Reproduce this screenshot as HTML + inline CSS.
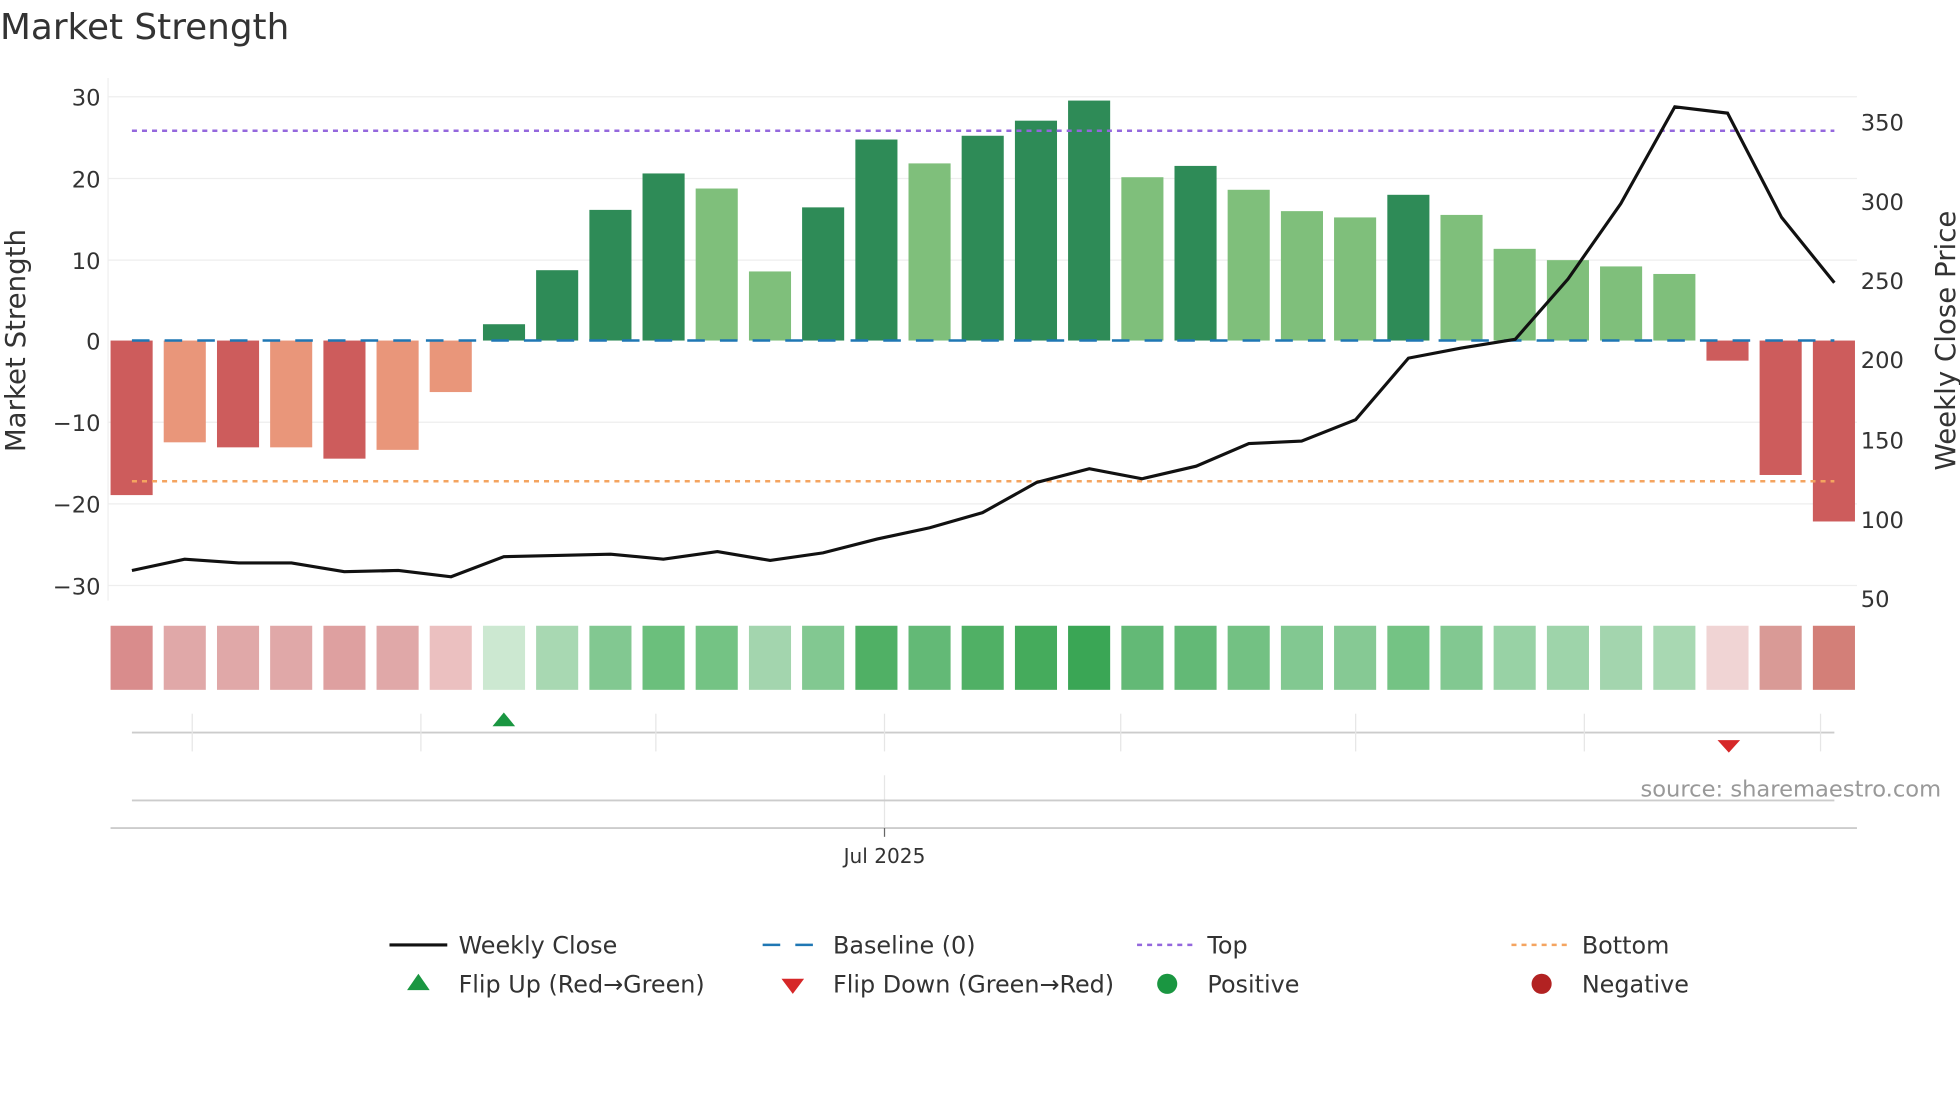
<!DOCTYPE html>
<html><head><meta charset="utf-8"><style>
html,body{margin:0;padding:0;background:#fff;width:1960px;height:1102px;overflow:hidden}
text{font-family:"DejaVu Sans","Liberation Sans",sans-serif}
</style></head><body>
<svg width="1960" height="1102" viewBox="0 0 1560 877" xmlns="http://www.w3.org/2000/svg">
<text x="0" y="31" font-size="28.5" fill="#333">Market Strength</text>
<line x1="86" y1="62" x2="86" y2="478" stroke="#eee"/>
<g stroke="#eeeeee" stroke-width="1">
<line x1="86" y1="77" x2="1478" y2="77"/><line x1="86" y1="142" x2="1478" y2="142"/><line x1="86" y1="207" x2="1478" y2="207"/><line x1="86" y1="336" x2="1478" y2="336"/><line x1="86" y1="401" x2="1478" y2="401"/><line x1="86" y1="466" x2="1478" y2="466"/>
</g>
<g font-size="18" fill="#333" text-anchor="end">
<text x="80" y="84">30</text><text x="80" y="149">20</text><text x="80" y="214">10</text><text x="80" y="278">0</text><text x="80" y="343">−10</text><text x="80" y="408">−20</text><text x="80" y="473">−30</text>
</g>
<g font-size="18" fill="#333">
<text x="1481" y="104">350</text><text x="1481" y="167">300</text><text x="1481" y="230">250</text><text x="1481" y="293">200</text><text x="1481" y="357">150</text><text x="1481" y="420">100</text><text x="1481" y="483">50</text>
</g>
<text transform="translate(20,271) rotate(-90)" font-size="22" fill="#333" text-anchor="middle">Market Strength</text>
<text transform="translate(1556,271) rotate(-90)" font-size="22" fill="#333" text-anchor="middle">Weekly Close Price</text>
<g>
<rect x="88" y="271" width="33.5" height="123" fill="#cd5c5c"/>
<rect x="130.3" y="271" width="33.5" height="81" fill="#e9967a"/>
<rect x="172.7" y="271" width="33.5" height="85" fill="#cd5c5c"/>
<rect x="215" y="271" width="33.5" height="85" fill="#e9967a"/>
<rect x="257.4" y="271" width="33.5" height="94" fill="#cd5c5c"/>
<rect x="299.7" y="271" width="33.5" height="87" fill="#e9967a"/>
<rect x="342" y="271" width="33.5" height="41" fill="#e9967a"/>
<rect x="384.4" y="258" width="33.5" height="13" fill="#2e8b57"/>
<rect x="426.7" y="215" width="33.5" height="56" fill="#2e8b57"/>
<rect x="469.1" y="167" width="33.5" height="104" fill="#2e8b57"/>
<rect x="511.4" y="138" width="33.5" height="133" fill="#2e8b57"/>
<rect x="553.7" y="150" width="33.5" height="121" fill="#7fbf7b"/>
<rect x="596.1" y="216" width="33.5" height="55" fill="#7fbf7b"/>
<rect x="638.4" y="165" width="33.5" height="106" fill="#2e8b57"/>
<rect x="680.8" y="111" width="33.5" height="160" fill="#2e8b57"/>
<rect x="723.1" y="130" width="33.5" height="141" fill="#7fbf7b"/>
<rect x="765.4" y="108" width="33.5" height="163" fill="#2e8b57"/>
<rect x="807.8" y="96" width="33.5" height="175" fill="#2e8b57"/>
<rect x="850.1" y="80" width="33.5" height="191" fill="#2e8b57"/>
<rect x="892.5" y="141" width="33.5" height="130" fill="#7fbf7b"/>
<rect x="934.8" y="132" width="33.5" height="139" fill="#2e8b57"/>
<rect x="977.1" y="151" width="33.5" height="120" fill="#7fbf7b"/>
<rect x="1019.5" y="168" width="33.5" height="103" fill="#7fbf7b"/>
<rect x="1061.8" y="173" width="33.5" height="98" fill="#7fbf7b"/>
<rect x="1104.2" y="155" width="33.5" height="116" fill="#2e8b57"/>
<rect x="1146.5" y="171" width="33.5" height="100" fill="#7fbf7b"/>
<rect x="1188.8" y="198" width="33.5" height="73" fill="#7fbf7b"/>
<rect x="1231.2" y="207" width="33.5" height="64" fill="#7fbf7b"/>
<rect x="1273.5" y="212" width="33.5" height="59" fill="#7fbf7b"/>
<rect x="1315.9" y="218" width="33.5" height="53" fill="#7fbf7b"/>
<rect x="1358.2" y="271" width="33.5" height="16" fill="#cd5c5c"/>
<rect x="1400.5" y="271" width="33.5" height="107" fill="#cd5c5c"/>
<rect x="1442.9" y="271" width="33.5" height="144" fill="#cd5c5c"/>
</g>
<line x1="105" y1="271" x2="1460" y2="271" stroke="#1f77b4" stroke-width="2" stroke-dasharray="14,12"/>
<line x1="105" y1="104" x2="1460" y2="104" stroke="#9467dd" stroke-width="2" stroke-dasharray="4,4"/>
<line x1="105" y1="383" x2="1460" y2="383" stroke="#f4a460" stroke-width="2" stroke-dasharray="4,4"/>
<polyline fill="none" stroke="#111" stroke-width="2.5" points="105,454 147,445 190,448 232,448 274,455 317,454 359,459 401,443 444,442 486,441 528,445 571,439 613,446 655,440 698,429 740,420 782,408 825,384 867,373 909,381 952,371 994,353 1036,351 1079,334 1121,285 1163,277 1206,270 1248,222 1290,162 1333,85 1375,90 1418,173 1460,225"/>
<g>
<rect x="88" y="498" width="33.5" height="51" fill="#d98c8c"/>
<rect x="130.3" y="498" width="33.5" height="51" fill="#e0a8a8"/>
<rect x="172.7" y="498" width="33.5" height="51" fill="#e0a8a8"/>
<rect x="215" y="498" width="33.5" height="51" fill="#e0a8a8"/>
<rect x="257.4" y="498" width="33.5" height="51" fill="#dea0a0"/>
<rect x="299.7" y="498" width="33.5" height="51" fill="#e0a8a8"/>
<rect x="342" y="498" width="33.5" height="51" fill="#ebc0c0"/>
<rect x="384.4" y="498" width="33.5" height="51" fill="#cce8d1"/>
<rect x="426.7" y="498" width="33.5" height="51" fill="#a8d8b2"/>
<rect x="469.1" y="498" width="33.5" height="51" fill="#82c891"/>
<rect x="511.4" y="498" width="33.5" height="51" fill="#6bbf7c"/>
<rect x="553.7" y="498" width="33.5" height="51" fill="#74c384"/>
<rect x="596.1" y="498" width="33.5" height="51" fill="#a3d5ae"/>
<rect x="638.4" y="498" width="33.5" height="51" fill="#82c891"/>
<rect x="680.8" y="498" width="33.5" height="51" fill="#50b065"/>
<rect x="723.1" y="498" width="33.5" height="51" fill="#63b976"/>
<rect x="765.4" y="498" width="33.5" height="51" fill="#50b065"/>
<rect x="807.8" y="498" width="33.5" height="51" fill="#45ab5c"/>
<rect x="850.1" y="498" width="33.5" height="51" fill="#3aa655"/>
<rect x="892.5" y="498" width="33.5" height="51" fill="#63b976"/>
<rect x="934.8" y="498" width="33.5" height="51" fill="#63b976"/>
<rect x="977.1" y="498" width="33.5" height="51" fill="#73c183"/>
<rect x="1019.5" y="498" width="33.5" height="51" fill="#82c891"/>
<rect x="1061.8" y="498" width="33.5" height="51" fill="#86c994"/>
<rect x="1104.2" y="498" width="33.5" height="51" fill="#74c384"/>
<rect x="1146.5" y="498" width="33.5" height="51" fill="#82c891"/>
<rect x="1188.8" y="498" width="33.5" height="51" fill="#98d2a5"/>
<rect x="1231.2" y="498" width="33.5" height="51" fill="#9ed4aa"/>
<rect x="1273.5" y="498" width="33.5" height="51" fill="#a3d5ae"/>
<rect x="1315.9" y="498" width="33.5" height="51" fill="#a8d8b2"/>
<rect x="1358.2" y="498" width="33.5" height="51" fill="#f0d4d4"/>
<rect x="1400.5" y="498" width="33.5" height="51" fill="#d99a96"/>
<rect x="1442.9" y="498" width="33.5" height="51" fill="#d37f78"/>
</g>
<line x1="105" y1="583" x2="1460" y2="583" stroke="#ccc" stroke-width="1.5"/>
<g stroke="#e6e6e6"><line x1="153" y1="568" x2="153" y2="598"/><line x1="335" y1="568" x2="335" y2="598"/><line x1="522" y1="568" x2="522" y2="598"/><line x1="704" y1="568" x2="704" y2="598"/><line x1="892" y1="568" x2="892" y2="598"/><line x1="1079" y1="568" x2="1079" y2="598"/><line x1="1261" y1="568" x2="1261" y2="598"/><line x1="1449" y1="568" x2="1449" y2="598"/><line x1="704" y1="617" x2="704" y2="658"/></g>
<polygon points="392,578 410,578 401,567" fill="#1a9641"/>
<polygon points="1367,589 1385,589 1376,599" fill="#d62728"/>
<line x1="105" y1="637" x2="1460" y2="637" stroke="#ccc" stroke-width="1.5"/>
<text x="1545" y="634" font-size="18" fill="#999" text-anchor="end">source: sharemaestro.com</text>
<line x1="88" y1="659" x2="1478" y2="659" stroke="#ccc" stroke-width="1.5"/>
<line x1="704" y1="659" x2="704" y2="666" stroke="#666"/>
<text x="704" y="687" font-size="16" fill="#333" text-anchor="middle">Jul 2025</text>
<g font-size="19" fill="#333">
<line x1="310" y1="752" x2="356" y2="752" stroke="#111" stroke-width="2.5"/><text x="365" y="759">Weekly Close</text>
<line x1="607" y1="752" x2="653" y2="752" stroke="#1f77b4" stroke-width="2" stroke-dasharray="14,12"/><text x="663" y="759">Baseline (0)</text>
<line x1="905" y1="752" x2="951" y2="752" stroke="#9467dd" stroke-width="2" stroke-dasharray="4,4"/><text x="961" y="759">Top</text>
<line x1="1203" y1="752" x2="1249" y2="752" stroke="#f4a460" stroke-width="2" stroke-dasharray="4,4"/><text x="1259" y="759">Bottom</text>
<polygon points="324,788 342,788 333,775" fill="#1a9641"/><text x="365" y="790">Flip Up (Red→Green)</text>
<polygon points="622,779 640,779 631,791" fill="#d62728"/><text x="663" y="790">Flip Down (Green→Red)</text>
<circle cx="929" cy="783" r="8" fill="#1a9641"/><text x="961" y="790">Positive</text>
<circle cx="1227" cy="783" r="8" fill="#b22222"/><text x="1259" y="790">Negative</text>
</g>
</svg>
</body></html>
